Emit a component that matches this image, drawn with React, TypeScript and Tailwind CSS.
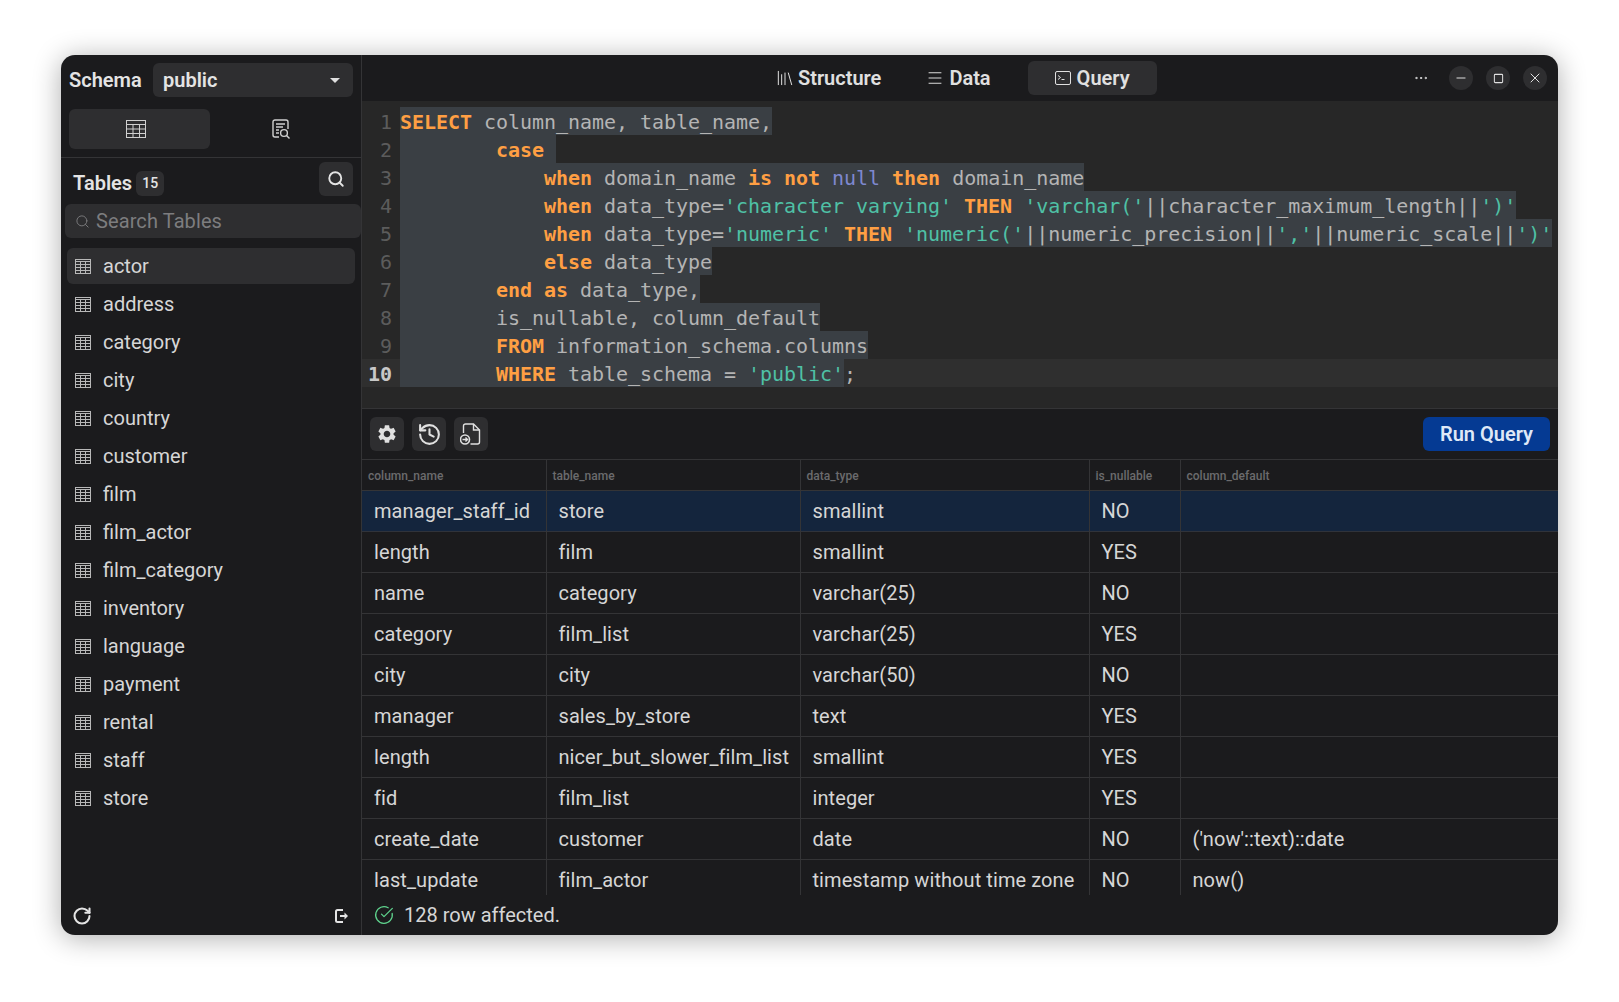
import { CircleCheckBig, History, Library, Menu, Minus, MoreHorizontal, RotateCw, Search, Square, X } from 'lucide-react';
import { MdSettings } from 'react-icons/md';
import React from 'react';

const TABLES = ['actor', 'address', 'category', 'city', 'country', 'customer', 'film', 'film_actor', 'film_category', 'inventory', 'language', 'payment', 'rental', 'staff', 'store'];

const ROWS = [
  ['manager_staff_id', 'store', 'smallint', 'NO', ''],
  ['length', 'film', 'smallint', 'YES', ''],
  ['name', 'category', 'varchar(25)', 'NO', ''],
  ['category', 'film_list', 'varchar(25)', 'YES', ''],
  ['city', 'city', 'varchar(50)', 'NO', ''],
  ['manager', 'sales_by_store', 'text', 'YES', ''],
  ['length', 'nicer_but_slower_film_list', 'smallint', 'YES', ''],
  ['fid', 'film_list', 'integer', 'YES', ''],
  ['create_date', 'customer', 'date', 'NO', "('now'::text)::date"],
  ['last_update', 'film_actor', 'timestamp without time zone', 'NO', 'now()'],
];

const HEADERS = ['column_name', 'table_name', 'data_type', 'is_nullable', 'column_default'];

type Tok = [string, 'k' | 't' | 's' | 'n'];

// sel = selected chars on the line, a selected newline counts as one more
const CODE: { toks: Tok[]; sel: number }[] = [
  { sel: 31, toks: [['SELECT', 'k'], [' column_name, table_name,', 't']] },
  { sel: 13, toks: [['        ', 't'], ['case', 'k']] },
  { sel: 57, toks: [['            ', 't'], ['when', 'k'], [' domain_name ', 't'], ['is not', 'k'], [' ', 't'], ['null', 'n'], [' ', 't'], ['then', 'k'], [' domain_name', 't']] },
  { sel: 93, toks: [['            ', 't'], ['when', 'k'], [' data_type=', 't'], ["'character varying'", 's'], [' ', 't'], ['THEN', 'k'], [' ', 't'], ["'varchar('", 's'], ['||character_maximum_length||', 't'], ["')'", 's']] },
  { sel: 96, toks: [['            ', 't'], ['when', 'k'], [' data_type=', 't'], ["'numeric'", 's'], [' ', 't'], ['THEN', 'k'], [' ', 't'], ["'numeric('", 's'], ['||numeric_precision||', 't'], ["','", 's'], ['||numeric_scale||', 't'], ["')'", 's']] },
  { sel: 26, toks: [['            ', 't'], ['else', 'k'], [' data_type', 't']] },
  { sel: 25, toks: [['        ', 't'], ['end as', 'k'], [' data_type,', 't']] },
  { sel: 35, toks: [['        is_nullable, column_default', 't']] },
  { sel: 39, toks: [['        ', 't'], ['FROM', 'k'], [' information_schema.columns', 't']] },
  { sel: 37, toks: [['        ', 't'], ['WHERE', 'k'], [' table_schema = ', 't'], ["'public'", 's'], [';', 't']] },
];

const TOK_CLASS = {
  k: 'text-[#ff9f43] font-bold',
  t: 'text-[#b4b4b4]',
  s: 'text-[#4fc1a6]',
  n: 'text-[#7e88d0]',
};

function TableIcon() {
  return (
    <svg width="16" height="15" viewBox="0 0 16 15" fill="none" stroke="#b8b8b8" strokeWidth="1" className="shrink-0">
      <rect x="0.5" y="0.5" width="15" height="14" />
      <path d="M0.5 2.5h15M0.5 5.5h15M0.5 8.5h15M0.5 11.5h15M5.5 2.5v12M10.5 2.5v12" />
    </svg>
  );
}

function TableTabIcon() {
  return (
    <svg width="20" height="18" viewBox="0 0 20 18" fill="none" stroke="#d0d0d0" strokeWidth="1" className="mr-[7px]">
      <rect x="0.5" y="0.5" width="19" height="17" />
      <path d="M0.5 4.5h19M0.5 9h19M0.5 13.5h19M7 4.5v13M13.5 4.5v13" />
    </svg>
  );
}

function ReportIcon() {
  return (
    <svg width="20" height="20" viewBox="0 0 20 20" fill="none" stroke="#d0d0d0" strokeWidth="1.4">
      <path d="M8 18H4a2 2 0 0 1-2-2V3a2 2 0 0 1 2-2h11a2 2 0 0 1 2 2v7" />
      <path d="M5 5h9M5 8h7M5 11h3M5 14h3" />
      <circle cx="13" cy="14" r="3.4" />
      <path d="m15.5 16.5 3 3" />
    </svg>
  );
}

function TerminalIcon() {
  return (
    <svg width="16" height="14" viewBox="0 0 16 14" fill="none" stroke="currentColor" strokeWidth="1">
      <rect x="0.5" y="0.5" width="15" height="13" rx="1.5" />
      <path d="m3 4.5 2.5 2L3 8.5M6.5 8.5h3" />
    </svg>
  );
}

function FileRunIcon() {
  return (
    <svg width="22" height="22" viewBox="0.5 0 22 22" fill="none" stroke="currentColor" strokeWidth="1.4">
      <path d="M4 10V3a2 2 0 0 1 2-2h8l6 6v12a2 2 0 0 1-2 2h-7" />
      <path d="M14 1v6h6" />
      <circle cx="5.5" cy="16.5" r="4.5" strokeWidth="1.6" />
      <path d="M3 16.5h5M6 14.5l2 2-2 2" />
    </svg>
  );
}

function ExitIcon() {
  return (
    <svg width="14" height="14" viewBox="0 0 14 14" fill="none" stroke="currentColor" strokeWidth="2">
      <path d="M8 1H2.5A1.5 1.5 0 0 0 1 2.5v9A1.5 1.5 0 0 0 2.5 13H8" />
      <path d="M5 7h6" />
      <path d="M9.5 3.5 13 7l-3.5 3.5z" fill="currentColor" stroke="none" />
    </svg>
  );
}

function Sidebar() {
  return (
    <aside className="w-[301px] shrink-0 flex flex-col border-r border-[#343436] text-[#e4e4e4]">
      <div className="flex items-center h-[42px] mt-[4px] pl-[8px] pr-[8px]">
        <span className="text-[20px] font-semibold w-[84px]">Schema</span>
        <div className="flex items-center justify-between w-[200px] h-[34px] rounded-md bg-[#2e2e30] pl-[10px] pr-[13px] font-semibold text-[20px]">
          public
          <span className="w-0 h-0 border-x-[5px] border-x-transparent border-t-[5px] border-t-[#e0e0e0]" />
        </div>
      </div>
      <div className="flex pl-[8px] pr-[8px] mt-[8px] pb-[8px] border-b border-[#343436]">
        <div className="w-[141px] h-[40px] rounded-md bg-[#2e2e30] flex items-center justify-center">
          <TableTabIcon />
        </div>
        <div className="w-[141px] h-[40px] flex items-center justify-center">
          <ReportIcon />
        </div>
      </div>
      <div className="flex items-center justify-between h-[46px] pl-[12px] pr-[8px]">
        <div className="flex items-center gap-[4px] mt-[4px]">
          <span className="text-[20px] font-semibold">Tables</span>
          <span className="w-[28px] h-[25px] rounded-md bg-[#2e2e30] text-[14px] font-medium flex items-center justify-center">15</span>
        </div>
        <div className="w-[34px] h-[34px] rounded-md bg-[#2e2e30] flex items-center justify-center -mt-[4px]">
          <Search size={18} strokeWidth={2.5} />
        </div>
      </div>
      <div className="ml-[4px] h-[34px] rounded-md bg-[#2e2e30] flex items-center pl-[10px] gap-[6px] text-[20px] tracking-[0.1px] text-[#7d7d7f]">
        <Search size={15} strokeWidth={1.5} />
        Search Tables
      </div>
      <div className="flex flex-col gap-[2px] mt-[10px] pl-[6px] pr-[6px] flex-1">
        {TABLES.map((name, i) => (
          <div key={name} className={`flex items-center h-[36px] rounded-md pl-[8px] gap-[12px] text-[20px] text-[#d6d6d6] ${i === 0 ? 'bg-[#2e2e30]' : ''}`}>
            <TableIcon />
            {name}
          </div>
        ))}
      </div>
      <div className="flex items-center justify-between h-[30px] mb-[4px] pl-[11px] pr-[12px]">
        <RotateCw size={20} strokeWidth={2.5} />
        <ExitIcon />
      </div>
    </aside>
  );
}

function TopBar() {
  return (
    <div className="flex items-center h-[46px] shrink-0 text-[20px] font-semibold text-[#e0e0e0]">
      <div className="flex items-center ml-[413px]">
        <Library size={20} strokeWidth={1.2} className="mr-[3px]" />
        <span>Structure</span>
      </div>
      <div className="flex items-center ml-[45px]">
        <Menu size={18} strokeWidth={1.3} className="mr-[5px]" />
        <span>Data</span>
      </div>
      <div className="flex items-center justify-center gap-[6px] ml-[37px] w-[129px] h-[34px] rounded-md bg-[#2e2e30]">
        <TerminalIcon />
        <span>Query</span>
      </div>
      <div className="flex items-center ml-auto mr-[11px] gap-[13px] text-[#e0e0e0]">
        <MoreHorizontal size={16} strokeWidth={1.5} className="mr-[7px]" />
        <div className="w-[24px] h-[24px] rounded-full bg-[#2e2e30] flex items-center justify-center"><Minus size={14} strokeWidth={1.7} /></div>
        <div className="w-[24px] h-[24px] rounded-full bg-[#2e2e30] flex items-center justify-center"><Square size={11} strokeWidth={2.2} /></div>
        <div className="w-[24px] h-[24px] rounded-full bg-[#2e2e30] flex items-center justify-center"><X size={16} strokeWidth={1.5} /></div>
      </div>
    </div>
  );
}

function Editor() {
  return (
    <div className="h-[308px] shrink-0 bg-[#272727] border-b border-[#343436] pt-[6px] text-[20px] leading-[28px] tracking-[-0.04px] overflow-hidden" style={{ fontFamily: '"DejaVu Sans Mono", monospace' }}>
      {CODE.map((line, i) => {
        const active = i === CODE.length - 1;
        return (
          <div key={i} className={`flex h-[28px] ${active ? 'bg-[#2f2f2f]' : ''}`}>
            <div className={`w-[38px] shrink-0 text-right pr-[8px] pt-px ${active ? 'text-[#c8c8c8] font-bold' : 'text-[#5c5c5c]'}`}>{i + 1}</div>
            <div className="relative whitespace-pre">
              <div className="absolute left-0 top-0 h-[28px] bg-[#3a3f44]" style={{ width: `${line.sel * 12}px` }} />
              <span className="relative top-px">
                {line.toks.map(([text, kind], j) => (
                  <span key={j} className={TOK_CLASS[kind]}>{text}</span>
                ))}
              </span>
            </div>
          </div>
        );
      })}
    </div>
  );
}

function Toolbar() {
  return (
    <div className="flex items-center h-[50px] shrink-0 pl-[8px] pr-[8px] gap-[8px] text-[#e0e0e0]">
      <div className="w-[34px] h-[34px] rounded-md bg-[#2e2e30] flex items-center justify-center"><MdSettings size={22} /></div>
      <div className="w-[34px] h-[34px] rounded-md bg-[#2e2e30] flex items-center justify-center"><History size={25} strokeWidth={2} /></div>
      <div className="w-[34px] h-[34px] rounded-md bg-[#2e2e30] flex items-center justify-center"><FileRunIcon /></div>
      <div className="ml-auto w-[127px] h-[34px] rounded-md bg-[#053a93] flex items-center justify-center text-[20px] font-semibold text-[#dfe8f7]">Run Query</div>
    </div>
  );
}

function ResultTable() {
  return (
    <div className="flex-1 min-h-0 overflow-hidden">
      <table className="w-full border-collapse table-fixed">
        <colgroup>
          <col className="w-[184px]" />
          <col className="w-[254px]" />
          <col className="w-[289px]" />
          <col className="w-[91px]" />
          <col />
        </colgroup>
        <thead>
          <tr className="h-[31px] border-y border-[#343436]">
            {HEADERS.map((h, i) => (
              <th key={h} className={`pl-[6px] pt-[2px] text-left text-[12px] font-medium text-[#6b6b6d] ${i > 0 ? 'border-l border-[#343436]' : ''}`}>{h}</th>
            ))}
          </tr>
        </thead>
        <tbody>
          {ROWS.map((row, i) => (
            <tr key={i} className={`h-[41px] border-b ${i === 0 ? 'bg-[#14253d] border-[#30333a]' : 'border-[#343436]'}`}>
              {row.map((cell, j) => (
                <td key={j} className={`pl-[12px] text-[20px] tracking-[0.08px] text-[#d6d6d6] whitespace-nowrap ${j > 0 ? 'border-l border-[#343436]' : ''}`}>{cell}</td>
              ))}
            </tr>
          ))}
        </tbody>
      </table>
    </div>
  );
}

export default function App() {
  return (
    <div className="w-[1619px] h-[1002px] bg-white pt-[55px] pl-[61px]" style={{ fontFamily: 'Roboto, sans-serif' }}>
      <div className="flex w-[1497px] h-[880px] rounded-[14px] bg-[#1b1b1d] overflow-hidden shadow-[0_3px_28px_rgba(0,0,0,0.32)]">
        <Sidebar />
        <main className="flex-1 min-w-0 flex flex-col">
          <TopBar />
          <Editor />
          <Toolbar />
          <ResultTable />
          <div className="flex items-center h-[40px] shrink-0 pl-[12px] gap-[10px] text-[20px] text-[#d6d6d6]">
            <CircleCheckBig size={20} strokeWidth={1.5} className="text-[#5fd38d]" />
            128 row affected.
          </div>
        </main>
      </div>
    </div>
  );
}
